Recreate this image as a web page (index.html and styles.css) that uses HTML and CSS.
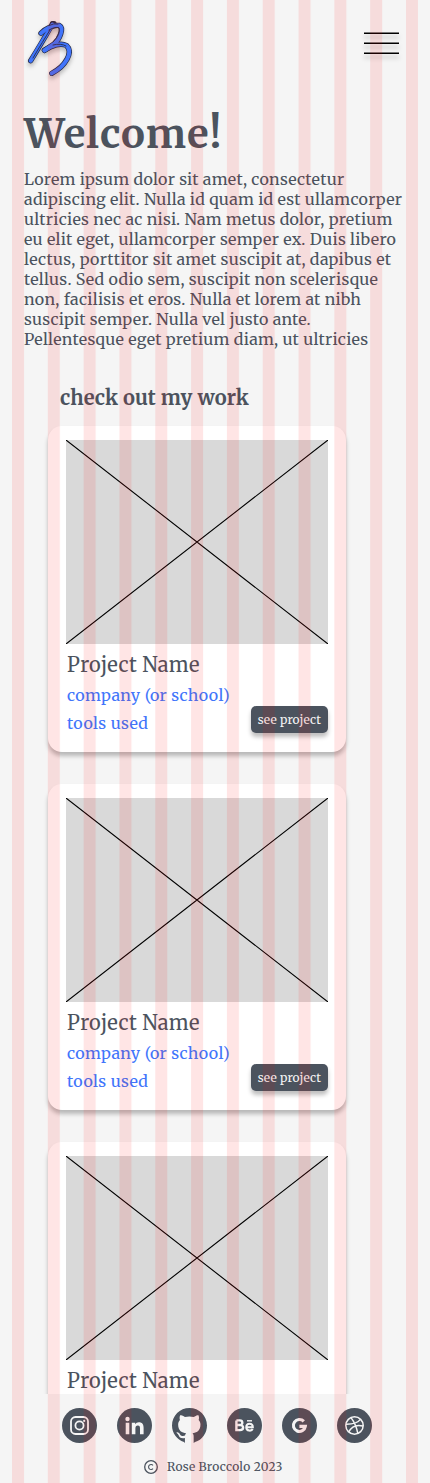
FILE: index.html
```html
<!DOCTYPE html>
<html lang="en">
<head>
<meta charset="utf-8">
<title>Rose Broccolo</title>
<link rel="stylesheet" href="styles.css">
</head>
<body>
<svg class="defs" width="0" height="0"><defs>
<symbol id="cross" viewBox="0 0 262 204"><path d="M0 0L262 204M262 0L0 204" stroke="#000" stroke-width="1.1"/></symbol>
<pattern id="cols" x="12" width="35.818" height="1483" patternUnits="userSpaceOnUse"><rect width="12" height="1483" fill="#f00" fill-opacity=".1"/></pattern>
</defs></svg>
<div class="page">
<main class="content">
<header class="top">
<svg class="logo" viewBox="0 0 50 62" fill="none" stroke-linecap="round" stroke-linejoin="round">
<g stroke="#252b46" stroke-width="5.4"><path d="M28.5 8L25 14Q17 28 6.7 44.7"/><path d="M17 17.3C21 12.5 30 8.5 35.5 9.5C40 12 36 23 30 28L20.5 34.3"/><path d="M20.5 34.3C28 29 37 26.5 42.5 29.5C49.5 36 42 50 27.8 57.3"/><path d="M28.5 7.6H30"/></g>
<g stroke="#4175fb" stroke-width="4"><path d="M28.5 8.5L24 16Q16 29 6.7 44.7"/><path d="M17 17.3C21 12.5 30 8.5 35.5 9.5C40 12 36 23 30 28L20.5 34.3"/><path d="M20.5 34.3C28 29 37 26.5 42.5 29.5C49.5 36 42 50 27.8 57.3"/></g>
<path d="M26 14Q19 25 9 42M25 14Q32 10 35 12Q37 18 29 26M29 29Q37 27 42 30M25 9.5Q30 7 34 8" stroke="#252b46" stroke-width=".9"/>
</svg>
<svg class="menu" viewBox="0 0 35 24"><path d="M0 1.25H35M0 11.25H35M0 21.25H35" stroke="#000" stroke-width="1.5"/></svg>
</header>
<section class="intro">
<h1>Welcome!</h1>
<p><span>Lorem ipsum dolor sit amet, consectetur</span>
<span>adipiscing elit. Nulla id quam id est ullamcorper</span>
<span>ultricies nec ac nisi. Nam metus dolor, pretium</span>
<span>eu elit eget, ullamcorper semper ex. Duis libero</span>
<span>lectus, porttitor sit amet suscipit at, dapibus et</span>
<span>tellus. Sed odio sem, suscipit non scelerisque</span>
<span>non, facilisis et eros. Nulla et lorem at nibh</span>
<span>suscipit semper. Nulla vel justo ante.</span>
<span>Pellentesque eget pretium diam, ut ultricies</span></p>
</section>
<h2>check out my work</h2>
<section class="cards">
<article class="card"><svg class="photo"><use href="#cross"/></svg><h3>Project Name</h3><div class="row"><div class="meta"><span class="company">company (or school)</span><span class="tools">tools used</span></div><a class="button">see project</a></div></article>
<article class="card"><svg class="photo"><use href="#cross"/></svg><h3>Project Name</h3><div class="row"><div class="meta"><span class="company">company (or school)</span><span class="tools">tools used</span></div><a class="button">see project</a></div></article>
<article class="card"><svg class="photo"><use href="#cross"/></svg><h3>Project Name</h3></article>
</section>
</main>
<footer class="footer">
<nav class="social">
<svg viewBox="0 0 35 35"><circle cx="17.5" cy="17.5" r="17.5" fill="#4b535e"/><g fill="none" stroke="#f5f5f5" stroke-width="1.8"><rect x="9" y="9" width="17" height="17" rx="4.5"/><circle cx="17.5" cy="17.5" r="4.1"/></g><circle cx="22.2" cy="12.9" r="1.1" fill="#f5f5f5"/></svg>
<svg viewBox="0 0 35 35"><circle cx="17.5" cy="17.5" r="17.5" fill="#4b535e"/><g fill="#f5f5f5"><circle cx="10.5" cy="11" r="2.2"/><path d="M8.7 14.7H12.3V26.3H8.7ZM14.8 14.7H18.2V16.3C19 15 20.2 14.3 21.8 14.3C25.3 14.3 26.6 16.4 26.6 19.8V26.3H23V20.5C23 18.7 22.6 17.5 20.9 17.5C19.1 17.5 18.4 18.8 18.4 20.5V26.3H14.8Z"/></g></svg>
<svg viewBox="0 0 16 16"><path fill="#4b535e" d="M8 0C3.58 0 0 3.58 0 8c0 3.54 2.29 6.53 5.47 7.59L5.9 16V13.73c-2.01.37-2.53-.49-2.69-.94-.09-.23-.48-.94-.82-1.13-.28-.15-.68-.52-.01-.53.63-.01 1.08.58 1.23.82.72 1.21 1.87.87 2.33.66.07-.52.28-.87.51-1.07-1.78-.2-3.64-.89-3.64-3.95 0-.87.31-1.59.82-2.15-.08-.2-.36-1.02.08-2.12 0 0 .67-.21 2.2.82.64-.18 1.32-.27 2-.27s1.36.09 2 .27c1.53-1.04 2.2-.82 2.2-.82.44 1.1.16 1.92.08 2.12.51.56.82 1.27.82 2.15 0 3.07-1.87 3.75-3.65 3.95.29.25.54.73.54 1.48V16L10.53 15.59A8.01 8.01 0 0 0 16 8c0-4.42-3.58-8-8-8z"/></svg>
<svg viewBox="0 0 35 35"><circle cx="17.5" cy="17.5" r="17.5" fill="#4b535e"/><g fill="none" stroke="#f5f5f5" stroke-width="2.4"><path d="M9.4 12.4V22.1H13C17.2 22.1 17 17 13.2 17H9.4M13 17C16.2 17 16.1 12.4 12.8 12.4H9.4"/><path d="M19.4 19.2H25.8C25.8 14.5 19.3 14.5 19.3 19.2C19.3 23.5 24.8 23.3 25.6 20.9" stroke-width="2.1"/><path d="M20 12.8H25" stroke-width="1.4"/></g></svg>
<svg viewBox="0 0 35 35"><circle cx="17.5" cy="17.5" r="17.5" fill="#4b535e"/><path d="M21.8 13.4A6 6 0 1 0 23.3 18.4H17.4" fill="none" stroke="#f5f5f5" stroke-width="3.1"/></svg>
<svg viewBox="0 0 35 35"><circle cx="17.5" cy="17.5" r="17.5" fill="#4b535e"/><g fill="none" stroke="#f5f5f5" stroke-width="1.5"><circle cx="17.5" cy="17.5" r="8.7"/><path d="M14 9.6C17 13.5 19.5 18.5 20.8 25.4M8.9 16.2C15 16.3 20.5 15.2 23.5 11.4M11.7 24C14.5 18.5 20 16.4 26.1 18"/></g></svg>
</nav>
<div class="copy"><svg viewBox="0 0 14 14" fill="none" stroke="#4b535e"><circle cx="7" cy="7" r="6.3" stroke-width="1.3"/><path d="M9 5.4A2.5 2.5 0 1 0 9 8.6" stroke-width="1.1"/></svg><span>Rose Broccolo 2023</span></div>
</footer>
<svg class="columns"><rect x="12" width="406" height="1483" fill="url(#cols)"/></svg>
</div>
</body>
</html>
```
FILE: styles.css
```css
* { box-sizing: border-box; margin: 0; padding: 0; }
body { background: #f5f5f5; color: #4b535e; font-family: Merriweather, "DejaVu Serif", serif; }
svg { display: block; }
.defs { position: absolute; }
.page { position: relative; width: 430px; height: 1483px; overflow: hidden; }
.content { height: 1394px; overflow: hidden; }
.top { display: flex; justify-content: space-between; height: 107px; padding: 16px 31px 0 24px; }
.logo { width: 50px; height: 62px; filter: drop-shadow(0 3px 2px rgba(0,0,0,.25)); }
.menu { width: 35px; height: 24px; margin-top: 16px; overflow: visible; filter: drop-shadow(0 4px 2px rgba(0,0,0,.25)); }
.intro { padding-left: 24px; white-space: nowrap; }
h1 { font-size: 40px; line-height: 54px; height: 52px; font-weight: 700; letter-spacing: .9px; }
.intro p { padding-top: 10px; font-size: 16px; line-height: 20px; letter-spacing: .26px; font-weight: 390; }
.intro span { display: block; width: max-content; }
h2 { margin-top: 36px; padding-left: 60px; font-size: 20px; line-height: 26px; height: 41px; font-weight: 700; letter-spacing: .12px; }
.cards { display: flex; flex-direction: column; gap: 32px; padding-left: 48px; }
.card { flex: none; width: 298px; height: 326px; padding: 14px 18px; background: #fff; border-radius: 14px; box-shadow: 0 4px 4px rgba(0,0,0,.25); }
.photo { width: 262px; height: 204px; background: #d9d9d9; }
h3 { padding: 8px 0 0 1px; font-size: 20px; line-height: 26px; font-weight: 390; letter-spacing: .36px; white-space: nowrap; }
.row { display: flex; justify-content: space-between; }
.meta { display: flex; flex-direction: column; padding: 3px 0 0 1px; font-size: 16px; line-height: 28px; font-weight: 390; letter-spacing: .37px; color: #4175fb; white-space: nowrap; }
.company, .tools { width: max-content; }
.button { width: 77px; height: 27px; margin-top: 28px; border-radius: 5px; background: #4b535e; color: #f5f5f5; font-size: 12px; line-height: 27px; letter-spacing: .16px; font-weight: 390; text-align: center; white-space: nowrap; box-shadow: 0 4px 4px rgba(0,0,0,.25); }
.footer { height: 89px; padding-top: 14px; background: #f5f5f5; }
.social { display: flex; gap: 20px; padding-left: 62px; }
.social svg { width: 35px; height: 35px; }
.copy { display: flex; align-items: center; gap: 9px; height: 16px; margin: 16px 0 0 144px; font-size: 12px; line-height: 16px; letter-spacing: .26px; font-weight: 390; white-space: nowrap; }
.copy svg { width: 14px; height: 14px; }
.columns { position: absolute; left: 0; top: 0; width: 430px; height: 1483px; pointer-events: none; }
```
